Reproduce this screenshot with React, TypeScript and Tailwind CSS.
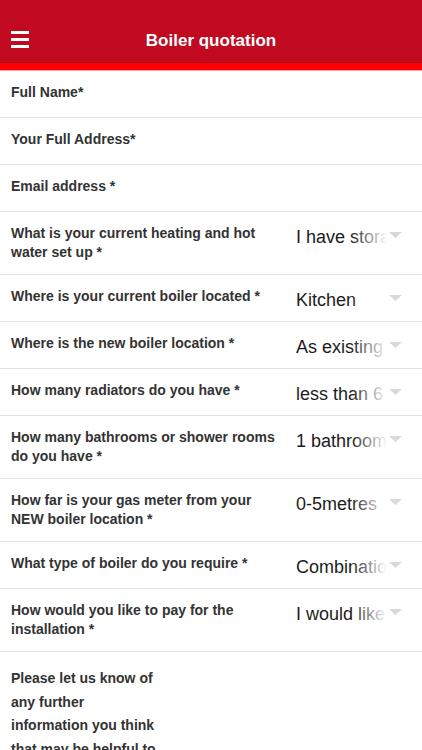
import React from 'react';

type Field = { label: string; value?: string };

const fields: Field[] = [
    { label: 'Full Name*' },
    { label: 'Your Full Address*' },
    { label: 'Email address *' },
    { label: 'What is your current heating and hot water set up *', value: 'I have storage' },
    { label: 'Where is your current boiler located *', value: 'Kitchen' },
    { label: 'Where is the new boiler location *', value: 'As existing' },
    { label: 'How many radiators do you have *', value: 'less than 6' },
    { label: 'How many bathrooms or shower rooms do you have *', value: '1 bathroom' },
    { label: 'How far is your gas meter from your NEW boiler location *', value: '0-5metres' },
    { label: 'What type of boiler do you require *', value: 'Combination' },
    { label: 'How would you like to pay for the installation *', value: 'I would like' },
];

const Caret = () => (
    <svg width="13" height="6" viewBox="0 0 13 6" className="shrink-0 mt-[6px] ml-[2px]">
        <path d="M0 0 L13 0 L6.5 6 Z" fill="#d9d9d9" />
    </svg>
);

const Row = ({ label, value }: Field) => (
    <div className="flex min-h-[47px] border-b border-[#e3e3e3]">
        <div className="w-[283px] shrink-0 pl-[11px] pr-[3px] py-3 text-[14px] leading-[19px] font-bold text-[#333]">
            {label}
        </div>
        {value && (
            <div className="flex items-start pt-[14px] pl-[13px]">
                <div className="relative w-[91px] overflow-hidden whitespace-nowrap text-[18px] leading-[23px] text-[#1c1c1c]">
                    {value}
                    <div className="absolute inset-y-0 right-0 w-[36px] bg-gradient-to-r from-white/0 to-white" />
                </div>
                <Caret />
            </div>
        )}
    </div>
);

export default function App() {
    return (
        <div className="w-[422px] h-[750px] overflow-hidden bg-white" style={{ fontFamily: '"Liberation Sans", Arial, sans-serif' }}>
            <header className="bg-[#c10a20] pt-[20px] border-b border-[#a8061a]">
                <div className="relative h-[42px] flex items-center justify-center">
                    <div className="absolute left-[11px] top-[11px] flex flex-col gap-[4px]">
                        <span className="block w-[18px] h-[3px] bg-white" />
                        <span className="block w-[18px] h-[3px] bg-white" />
                        <span className="block w-[18px] h-[3px] bg-white" />
                    </div>
                    <h1 className="text-white font-bold text-[17px]">Boiler quotation</h1>
                </div>
            </header>
            <div className="h-[8px] bg-[#ff0000] border-b border-[#ff9a9a]" />
            {fields.map(f => (
                <Row key={f.label} {...f} />
            ))}
            <div className="pl-[11px] pt-[15px] w-[161px] text-[14px] leading-[23.7px] font-bold text-[#333]">
                Please let us know of any further information you think that may be helpful to us
            </div>
        </div>
    );
}
